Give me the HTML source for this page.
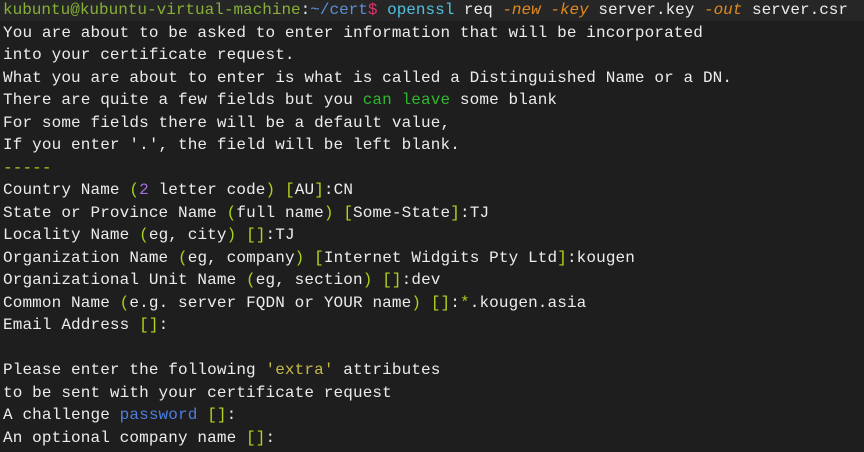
<!DOCTYPE html>
<html><head><meta charset="utf-8"><style>
html,body{margin:0;padding:0;background:#1e1e1e;width:864px;height:452px;overflow:hidden}
.hl{position:absolute;left:0;top:0;width:864px;height:21px;background:#262626}
pre{position:absolute;left:3px;top:-1px;margin:0;font-family:"Liberation Mono",monospace;font-size:16px;line-height:22.5px;color:#ececec;white-space:pre;letter-spacing:0.12px}
.f{letter-spacing:0}
.u{color:#86b036}.p{color:#5b8fd6}.r{color:#e0306a}.c{color:#4fc0e0}.o{color:#e08a1e;font-style:italic}
.y{color:#a8d21c}.b{color:#b2d41f}.g{color:#2fb82f}.n{color:#a070e0}.s{color:#c8b848}.bl{color:#4c7ee0}
</style></head><body><div class="hl"></div><pre><span class="f"><span class="u">kubuntu@kubuntu-virtual-machine</span>:<span class="p">~/cert</span><span class="r">$</span> <span class="c">openssl</span> req <span class="o">-new</span> <span class="o">-key</span> server.key <span class="o">-out</span> server.csr</span>
You are about to be asked to enter information that will be incorporated
into your certificate request.
What you are about to enter is what is called a Distinguished Name or a DN.
There are quite a few fields but you <span class="g">can leave</span> some blank
For some fields there will be a default value,
If you enter '.', the field will be left blank.
<span class="y">-----</span>
Country Name <span class="y">(</span><span class="n">2</span> letter code<span class="y">)</span> <span class="b">[</span>AU<span class="b">]</span>:CN
State or Province Name <span class="y">(</span>full name<span class="y">)</span> <span class="b">[</span>Some-State<span class="b">]</span>:TJ
Locality Name <span class="y">(</span>eg, city<span class="y">)</span> <span class="b">[]</span>:TJ
Organization Name <span class="y">(</span>eg, company<span class="y">)</span> <span class="b">[</span>Internet Widgits Pty Ltd<span class="b">]</span>:kougen
Organizational Unit Name <span class="y">(</span>eg, section<span class="y">)</span> <span class="b">[]</span>:dev
Common Name <span class="y">(</span>e.g. server FQDN or YOUR name<span class="y">)</span> <span class="b">[]</span>:<span class="y">*</span>.kougen.asia
Email Address <span class="b">[]</span>:

Please enter the following <span class="s">'extra'</span> attributes
to be sent with your certificate request
A challenge <span class="bl">password</span> <span class="b">[]</span>:
An optional company name <span class="b">[]</span>:</pre></body></html>
